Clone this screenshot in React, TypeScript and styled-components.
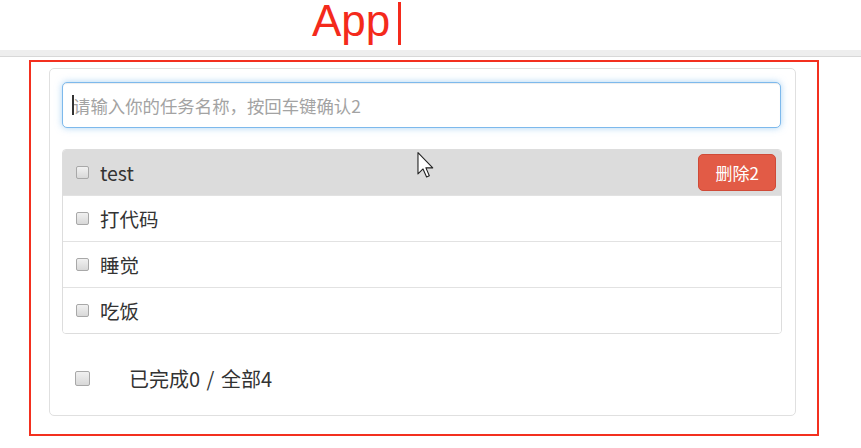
import React from "react";
import styled, { createGlobalStyle } from "styled-components";

const GlobalStyle = createGlobalStyle`
  html, body {
    margin: 0;
    padding: 0;
    background: #ffffff;
  }
  body {
    font-family: "Noto Sans CJK SC", "Noto Sans", sans-serif;
    color: #333333;
  }
  * { box-sizing: border-box; }
`;

const Page = styled.div`
  position: relative;
  width: 861px;
  height: 448px;
  overflow: hidden;
`;

const Header = styled.header`
  display: flex;
  align-items: flex-start;
  height: 50px;
  padding-left: 312px;
`;

const Title = styled.h1`
  margin: 0;
  font-family: "Liberation Sans", Arial, sans-serif;
  font-weight: 400;
  font-size: 44px;
  line-height: 41px;
  color: #f42a1c;
`;

const TitleCaret = styled.span`
  display: block;
  width: 3px;
  height: 43px;
  margin: 2px 0 0 8px;
  background: #f42a1c;
`;

const Band = styled.div`
  height: 7px;
  background: #eeeeee;
  border-bottom: 1px solid #d8d8d8;
`;

const Frame = styled.div`
  width: 790px;
  margin: 3px 0 0 29px;
  border: 2px solid #f3301f;
  padding: 6px 21px 18px 18px;
`;

const Card = styled.section`
  border: 1px solid #e0e0e0;
  border-radius: 5px;
  background: #ffffff;
  padding: 13px 14px 13px 12px;
`;

const InputWrap = styled.div`
  position: relative;
`;

const TaskInput = styled.input`
  display: block;
  width: 100%;
  height: 46px;
  padding: 0 10px;
  border: 1px solid #7db9ec;
  border-radius: 5px;
  box-shadow: inset 0 1px 1px rgba(0, 0, 0, 0.075), 0 0 7px rgba(102, 175, 233, 0.55);
  font-family: "Noto Sans CJK SC", sans-serif;
  font-size: 17.4px;
  color: #555555;
  outline: none;
  &::placeholder {
    color: #a3a3a3;
  }
`;

const TextCaret = styled.span`
  position: absolute;
  left: 10px;
  top: 13px;
  width: 2px;
  height: 20px;
  background: #333333;
`;

const List = styled.ul`
  list-style: none;
  margin: 21px -1px 0 0;
  padding: 0;
  border: 1px solid #dddddd;
  border-radius: 4px;
  overflow: hidden;
`;

const Row = styled.li<{ $active?: boolean }>`
  display: flex;
  align-items: center;
  height: 46px;
  padding: 0 5px 0 13px;
  background: ${(p) => (p.$active ? "#dcdcdc" : "#ffffff")};
  border-bottom: 1px solid #e2e2e2;
  &:last-child {
    border-bottom: none;
    height: 45px;
  }
`;

const Check = styled.input<{ $size?: number }>`
  appearance: none;
  -webkit-appearance: none;
  flex: none;
  margin: 0;
  width: ${(p) => p.$size ?? 13}px;
  height: ${(p) => p.$size ?? 13}px;
  border: 1px solid #a8a8a8;
  border-radius: 2px;
  background: linear-gradient(#f1f1f1, #d8d8d8);
`;

const Label = styled.span`
  margin-left: 11px;
  font-size: 19.5px;
  color: #333333;
  flex: 1;
`;

const DeleteButton = styled.button`
  height: 37px;
  padding: 0 16px 0 17px;
  border: 1px solid #cf4a37;
  border-radius: 5px;
  background: #e25b46;
  color: #ffffff;
  font-family: "Noto Sans CJK SC", sans-serif;
  font-size: 17px;
  cursor: pointer;
`;

const Footer = styled.footer`
  display: flex;
  align-items: center;
  height: 46px;
  margin-top: 22px;
  padding-left: 13px;
  padding-bottom: 1px;
`;

const Summary = styled.span`
  margin-left: 39px;
  font-size: 20px;
  word-spacing: 2px;
  color: #333333;
  line-height: 1;
`;

const Pointer = styled.svg`
  position: absolute;
  left: 417px;
  top: 152px;
  pointer-events: none;
`;

const todos = [
  { id: 1, name: "test", hover: true },
  { id: 2, name: "打代码" },
  { id: 3, name: "睡觉" },
  { id: 4, name: "吃饭" },
];

export default function App() {
  const done = 0;
  return (
    <Page>
      <GlobalStyle />
      <Header>
        <Title>App</Title>
        <TitleCaret />
      </Header>
      <Band />
      <Frame>
        <Card>
          <InputWrap>
            <TaskInput placeholder="请输入你的任务名称，按回车键确认2" />
            <TextCaret />
          </InputWrap>
          <List>
            {todos.map((t) => (
              <Row key={t.id} $active={t.hover}>
                <Check type="checkbox" />
                <Label>{t.name}</Label>
                {t.hover && <DeleteButton>删除2</DeleteButton>}
              </Row>
            ))}
          </List>
          <Footer>
            <Check type="checkbox" $size={15} />
            <Summary>
              已完成{done} / 全部{todos.length}
            </Summary>
          </Footer>
        </Card>
      </Frame>
      <Pointer width="17" height="26" viewBox="0 0 12 19">
        <path
          d="M0.5 0.5 L0.5 16 L4.2 12.4 L6.8 18.3 L8.8 17.4 L6.3 11.6 L11.3 11.6 Z"
          fill="#ffffff"
          stroke="#222222"
          strokeWidth="0.8"
          strokeLinejoin="round"
        />
      </Pointer>
    </Page>
  );
}
